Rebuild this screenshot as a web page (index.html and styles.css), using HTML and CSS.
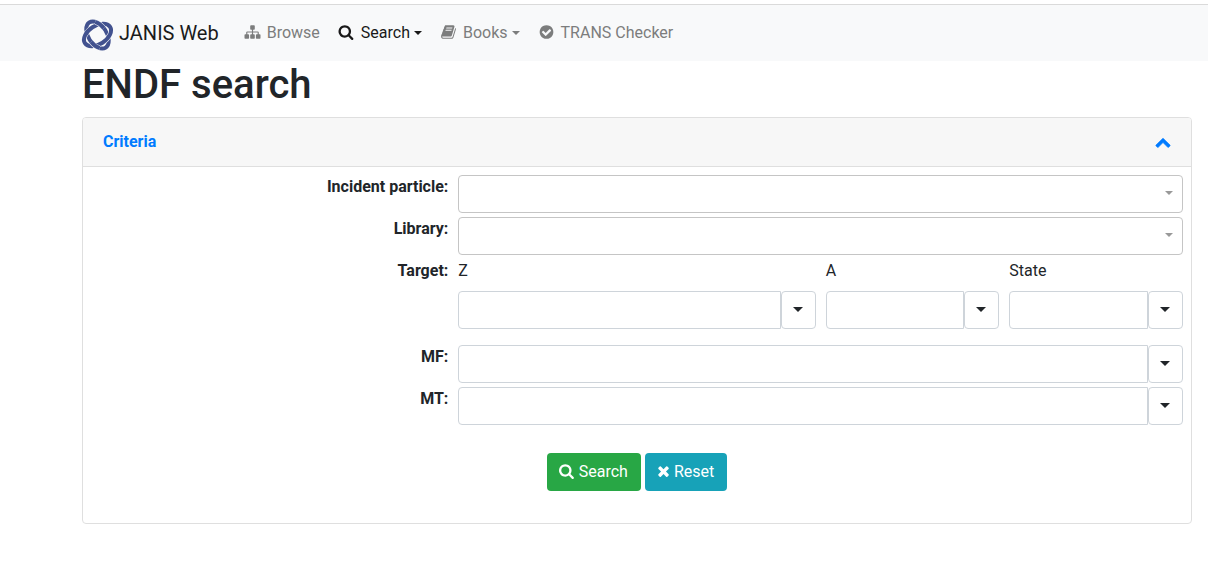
FILE: index.html
```
<!DOCTYPE html>
<html lang="en">
<head>
<meta charset="utf-8">
<title>JANIS Web - ENDF search</title>
<link rel="stylesheet" href="styles.css">
</head>
<body>
<svg class="sprite" aria-hidden="true">
  <symbol id="search" viewBox="0 0 1792 1792"><path d="M1152 832q0-185-131.500-316.500t-316.500-131.500-316.500 131.500-131.500 316.500 131.500 316.500 316.500 131.500 316.500-131.500 131.500-316.500zm512 832q0 52-38 90t-90 38q-54 0-90-38l-343-342q-179 124-399 124-143 0-273.500-55.500t-225-150-150-225-55.500-273.500 55.500-273.500 150-225 225-150 273.500-55.500 273.500 55.500 225 150 150 225 55.500 273.500q0 220-124 399l343 343q37 37 37 90z"/></symbol>
  <symbol id="sitemap" viewBox="0 0 1792 1792"><path d="M1792 1248v320q0 40-28 68t-68 28h-320q-40 0-68-28t-28-68v-320q0-40 28-68t68-28h96v-192h-512v192h96q40 0 68 28t28 68v320q0 40-28 68t-68 28h-320q-40 0-68-28t-28-68v-320q0-40 28-68t68-28h96v-192h-512v192h96q40 0 68 28t28 68v320q0 40-28 68t-68 28h-320q-40 0-68-28t-28-68v-320q0-40 28-68t68-28h96v-192q0-52 38-90t90-38h512v-192h-96q-40 0-68-28t-28-68v-320q0-40 28-68t68-28h320q40 0 68 28t28 68v320q0 40-28 68t-68 28h-96v192h512q52 0 90 38t38 90v192h96q40 0 68 28t28 68z"/></symbol>
  <symbol id="book" viewBox="0 0 1792 1792"><path d="M1703 478q40 57 18 129l-275 906q-19 64-76.500 107.500t-122.500 43.500h-923q-77 0-148.500-53.500t-99.500-131.500q-24-67-2-127 0-4 3-27t4-37q1-8-3-21.500t-3-19.500q2-11 8-21t16.500-23.500 16.500-23.500q23-38 45-91.500t30-91.500q3-10 .5-30t-.5-28q3-11 17-28t17-23q21-36 42-92t25-90q1-9-2.500-32t.5-28q4-13 22-30.500t22-22.500q19-26 42.500-84.500t27.500-96.500q1-8-3-25.500t-2-26.500q2-8 9-18t18-23 17-21q8-12 16.500-30.500t15-35 16-36 19.500-32 26.500-23.500 36-11.500 47.500 5.500l-1 3q38-9 51-9h761q74 0 114 56t18 130l-274 906q-36 119-71.500 153.500t-128.500 34.500h-869q-27 0-38 15-11 16-1 43 24 70 144 70h923q29 0 56-15.500t35-41.500l300-987q7-22 5-57 38 15 59 43zm-1064 2q-4 13 2 22.500t20 9.500h608q13 0 25.500-9.500t16.500-22.500l21-64q4-13-2-22.500t-20-9.500h-608q-13 0-25.500 9.500t-16.500 22.500zm-83 256q-4 13 2 22.500t20 9.500h608q13 0 25.500-9.500t16.500-22.500l21-64q4-13-2-22.500t-20-9.500h-608q-13 0-25.500 9.500t-16.500 22.500z"/></symbol>
  <symbol id="check" viewBox="0 0 1792 1792"><path d="M1412 734q0-28-18-46l-91-90q-19-19-45-19t-45 19l-408 407-226-226q-19-19-45-19t-45 19l-91 90q-18 18-18 46 0 27 18 45l362 362q19 19 45 19 27 0 46-19l543-543q18-18 18-45zm252 162q0 209-103 385.500t-279.500 279.500-385.500 103-385.500-103-279.500-279.500-103-385.500 103-385.500 279.500-279.500 385.500-103 385.500 103 279.500 279.500 103 385.500z"/></symbol>
  <symbol id="times" viewBox="190 0 1408 1792"><path d="M1490 1322q0 40-28 68l-136 136q-28 28-68 28t-68-28l-294-294-294 294q-28 28-68 28t-68-28l-136-136q-28-28-28-68t28-68l294-294-294-294q-28-28-28-68t28-68l136-136q28-28 68-28t68 28l294 294 294-294q28-28 68-28t68 28l136 136q28 28 28 68t-28 68l-294 294 294 294q28 28 28 68z"/></symbol>
  <symbol id="chevron" viewBox="0 0 1792 1792"><path d="M1683 1331l-166 165q-19 19-45 19t-45-19l-531-531-531 531q-19 19-45 19t-45-19l-166-165q-19-19-19-45.500t19-45.500l742-741q19-19 45-19t45 19l742 741q19 19 19 45.500t-19 45.500z"/></symbol>
</svg>

<nav class="navbar">
  <a class="brand" href="#">
    <svg class="logo" viewBox="0 0 32 32" aria-hidden="true">
      <defs>
        <ellipse id="steep" cx="15.500" cy="16" rx="15" ry="9.200" pathLength="100" transform="rotate(57 15.500 16)"/>
        <ellipse id="flat" cx="15.500" cy="16" rx="15" ry="9.200" transform="rotate(-33 15.500 16)"/>
      </defs>
      <use class="ring" href="#steep"/>
      <use class="halo" href="#flat"/>
      <use class="ring" href="#flat"/>
      <use class="halo over" href="#steep"/>
      <use class="ring over" href="#steep"/>
    </svg>
    <span>JANIS Web</span>
  </a>
  <a class="nav-link" href="#"><svg class="icon nav-icon"><use href="#sitemap"/></svg>Browse</a>
  <a class="nav-link active caret" href="#"><svg class="icon nav-icon"><use href="#search"/></svg>Search</a>
  <a class="nav-link caret" href="#"><svg class="icon nav-icon"><use href="#book"/></svg>Books</a>
  <a class="nav-link" href="#"><svg class="icon nav-icon"><use href="#check"/></svg>TRANS Checker</a>
</nav>

<main class="page">
  <h1>ENDF search</h1>
  <section class="card">
    <header class="card-header">
      <a href="#criteria">Criteria</a>
      <a href="#criteria" aria-label="Collapse"><svg class="icon chevron"><use href="#chevron"/></svg></a>
    </header>
    <form class="criteria" id="criteria">
      <div class="row">
        <label class="name" for="particle">Incident particle:</label>
        <div class="field select-wrap"><select id="particle"><option></option></select></div>
      </div>
      <div class="row">
        <label class="name" for="library">Library:</label>
        <div class="field select-wrap"><select id="library"><option></option></select></div>
      </div>
      <div class="row">
        <span class="name">Target:</span>
        <div class="target">
          <div class="part">
            <label for="z">Z</label>
            <div class="combo"><input id="z" type="text"><button class="toggle caret" type="button" aria-label="Show Z values"></button></div>
          </div>
          <div class="part">
            <label for="a">A</label>
            <div class="combo"><input id="a" type="text"><button class="toggle caret" type="button" aria-label="Show A values"></button></div>
          </div>
          <div class="part">
            <label for="state">State</label>
            <div class="combo"><input id="state" type="text"><button class="toggle caret" type="button" aria-label="Show states"></button></div>
          </div>
        </div>
      </div>
      <div class="row">
        <label class="name" for="mf">MF:</label>
        <div class="field combo"><input id="mf" type="text"><button class="toggle caret" type="button" aria-label="Show MF values"></button></div>
      </div>
      <div class="row">
        <label class="name" for="mt">MT:</label>
        <div class="field combo"><input id="mt" type="text"><button class="toggle caret" type="button" aria-label="Show MT values"></button></div>
      </div>
      <div class="actions">
        <button class="btn go" type="submit"><svg class="icon"><use href="#search"/></svg>Search</button>
        <button class="btn reset" type="reset"><svg class="icon times"><use href="#times"/></svg>Reset</button>
      </div>
    </form>
  </section>
</main>
</body>
</html>
```
FILE: styles.css
```
*, *::before, *::after { box-sizing: border-box; }
body {
  margin: 0;
  padding-top: 4px;
  background: #fff;
  color: #212529;
  font: 16px/24px Roboto, "Liberation Sans", sans-serif;
}
a { color: #007bff; text-decoration: none; }
button, input, select { font: inherit; color: inherit; }
.sprite { display: none; }
.icon { width: 16px; height: 16px; fill: currentColor; flex: none; }

.navbar {
  display: flex;
  align-items: center;
  height: 57px;
  padding: 0 16px 0 82px;
  border-top: 1px solid #dadada;
  background: #f8f9fa;
}
.brand {
  display: flex;
  align-items: center;
  gap: 5px;
  margin-right: 15px;
  color: #1a1b1b;
  font-size: 20px;
  line-height: 30px;
}
.logo { width: 32px; height: 32px; margin-top: 4px; fill: none; overflow: visible; }
.ring { stroke: #42528f; stroke-width: 4; }
.halo { stroke: #f8f9fa; stroke-width: 5; }
.over { stroke-dasharray: 14 36; stroke-dashoffset: -8; }
.nav-link {
  display: flex;
  align-items: center;
  padding: 8px;
  color: #7c7d7d;
}
.nav-link.active { color: #191919; }
.nav-icon { width: 21px; margin: 0 4px 2px 0; }
.caret::after {
  content: "";
  border: 5px solid transparent;
  border-top-color: currentColor;
  border-bottom: 0;
}
.nav-link.caret::after { margin-left: 4px; border-width: 4px 4px 0; }

.page { padding: 0 16px 0 82px; }
h1 { margin: 0 0 8px; font-size: 40px; line-height: 48px; font-weight: 500; }
.card { border: 1px solid #dfdfdf; border-radius: 4px; }
.card-header {
  display: flex;
  justify-content: space-between;
  align-items: center;
  padding: 12px 20px;
  border-bottom: 1px solid #dfdfdf;
  border-radius: 3px 3px 0 0;
  background: #f7f7f7;
  font-weight: 700;
}
.chevron { display: block; stroke: currentColor; stroke-width: 60; }

.criteria { padding: 8px 8px 32px; }
.row {
  display: grid;
  grid-template-columns: minmax(0, 1fr) minmax(0, 2fr);
  margin: 0 -5px 4px;
}
.name { padding: 0 5px; text-align: right; font-weight: 700; }
.field { margin: 0 5px; }
.select-wrap { position: relative; }
.select-wrap::after {
  content: "";
  position: absolute;
  top: 16px;
  right: 10px;
  border: 4px solid transparent;
  border-top-color: #999;
  border-bottom: 0;
  pointer-events: none;
}
select {
  display: block;
  width: 100%;
  height: 38px;
  border: 1px solid #c5c5c5;
  border-radius: 4px;
  background: #fff;
  appearance: none;
}
.target {
  display: grid;
  grid-template-columns: minmax(0, 2fr) minmax(0, 1fr) minmax(0, 1fr);
  margin-bottom: 12px;
}
.part {
  display: grid;
  grid-template-columns: minmax(0, 1fr);
  gap: 8px;
  padding: 0 5px;
}
.combo { display: flex; }
.combo input {
  flex: 1;
  min-width: 0;
  height: 38px;
  padding: 6px 12px;
  border: 1px solid #ced4da;
  border-radius: 4px 0 0 4px;
  background: #fff;
}
.toggle {
  display: flex;
  flex: none;
  align-items: center;
  justify-content: center;
  width: 35px;
  height: 38px;
  padding: 0 1px 1px 0;
  border: 1px solid #ced4da;
  border-radius: 4px;
  background: #fff;
}
.actions { display: flex; justify-content: center; gap: 4px; margin-top: 28px; }
.btn {
  display: flex;
  align-items: center;
  gap: 4px;
  height: 38px;
  padding: 0 13px 0 12px;
  border: 0;
  border-radius: 4px;
  color: #fff;
}
.btn .icon { margin-bottom: 2px; }
.go { background: #28a745; }
.reset { background: #17a2b8; }
.times { width: 13px; }
```
